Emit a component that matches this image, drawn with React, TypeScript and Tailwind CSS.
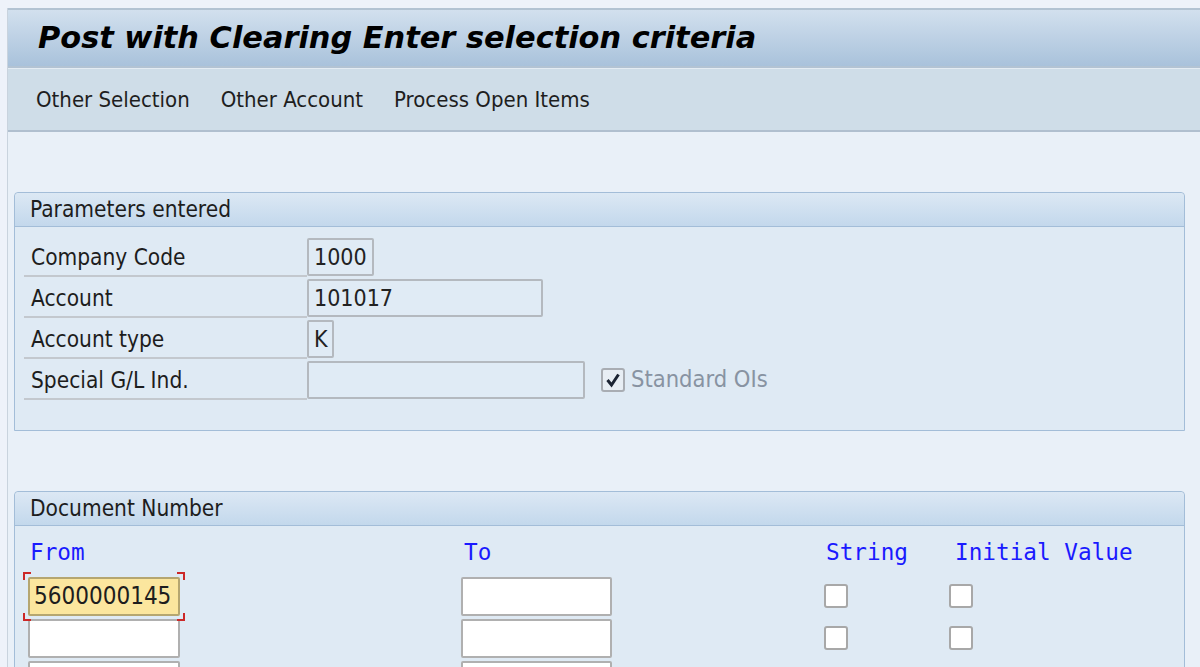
import React from "react";

const sans = { fontFamily: '"DejaVu Sans Condensed", "DejaVu Sans", sans-serif' };

const ReadOnlyBox = ({ value, width }: { value: string; width: string }) => (
  <div
    className={`h-[38px] ${width} border-2 border-[#b4b9bf] rounded-[2px] bg-[#e0ebf5] px-[5px] text-[23px] leading-[34px] text-[#222]`}
  >
    {value}
  </div>
);

const Checkbox = ({ checked, disabled }: { checked?: boolean; disabled?: boolean }) => (
  <div
    className={`w-[24px] h-[24px] rounded-[3px] border-2 flex items-center justify-center ${
      disabled ? "border-[#a9adb3] bg-[#e8eef4]" : "border-[#a8a8a8] bg-white"
    }`}
  >
    {checked && (
      <svg width="16" height="16" viewBox="0 0 16 16">
        <path d="M2.5 8 L6.5 13 L13.5 2.5" fill="none" stroke="#1c2433" strokeWidth="3" />
      </svg>
    )}
  </div>
);

const GroupBox = ({ title, children }: { title: string; children: React.ReactNode }) => (
  <div className="ml-[6px] mr-[15px] border border-[#a3bdd8] rounded-t-[4px] bg-[#dfeaf4]">
    <div className="h-[34px] px-[15px] bg-gradient-to-b from-[#dce8f4] to-[#c3d8ec] border-b border-[#a3bdd8] rounded-t-[4px] text-[22.5px] leading-[33px] text-[#1d1d1d]">
      {title}
    </div>
    {children}
  </div>
);

const params = [
  { label: "Company Code", value: "1000", width: "w-[67px]" },
  { label: "Account", value: "101017", width: "w-[236px]" },
  { label: "Account type", value: "K", width: "w-[27px]" },
  { label: "Special G/L Ind.", value: "", width: "w-[278px]" },
];

const mono = { fontFamily: '"DejaVu Sans Mono", "Liberation Mono", monospace' };

export default function App() {
  return (
    <div className="w-[1200px] h-[667px] overflow-hidden bg-[#eef2fa]" style={sans}>
      <div className="h-[8px]" />
      <div className="ml-[7px] border-l border-[#c9d3de] bg-[#e9f0f8] h-[659px]">
        {/* Title bar */}
        <div className="h-[60px] border-t-2 border-b-2 border-[#b3c3d3] bg-gradient-to-b from-[#d2e0ee] to-[#a9c2db] pl-[30px]">
          <h1
            className="text-[30.4px] leading-[56px] font-bold italic text-black"
            style={{ fontFamily: '"DejaVu Sans", Verdana, sans-serif' }}
          >
            Post with Clearing Enter selection criteria
          </h1>
        </div>

        {/* Toolbar */}
        <div className="h-[64px] bg-[#cfdde8] border-t border-[#e4ecf3] border-b-2 border-b-[#b0bfcf] flex items-center gap-[31px] pl-[28px] text-[22px] text-[#1e1e1e]">
          <span>Other Selection</span>
          <span>Other Account</span>
          <span>Process Open Items</span>
        </div>

        <div className="h-[60px]" />

        {/* Parameters entered */}
        <GroupBox title="Parameters entered">
          <div className="pt-[9px] pb-[30px] pl-[9px]">
            {params.map((p, i) => (
              <div key={p.label} className="flex items-end h-[41px]">
                <div className="w-[283px] h-[39px] border-b-2 border-[#c3c8ce] pl-[7px] text-[22.5px] leading-[38px] text-[#1d1d1d]">
                  {p.label}
                </div>
                <div className="flex items-center gap-[16px] h-[41px]">
                  <ReadOnlyBox value={p.value} width={p.width} />
                  {i === 3 && (
                    <div className="flex items-center gap-[6px]">
                      <Checkbox checked disabled />
                      <span className="text-[23.5px] text-[#8893a2]">Standard OIs</span>
                    </div>
                  )}
                </div>
              </div>
            ))}
          </div>
        </GroupBox>

        <div className="h-[60px]" />

        {/* Document Number */}
        <GroupBox title="Document Number">
          <div className="pl-[15px] pt-[12px]">
            <div className="flex h-[37px] text-[22.7px] leading-[28px] text-[#1a1aff]" style={mono}>
              <span className="w-[434px]">From</span>
              <span className="w-[362px]">To</span>
              <span className="w-[129px]">String</span>
              <span>Initial Value</span>
            </div>
            {[0, 1, 2].map((r) => (
              <div key={r} className="flex items-center h-[42px]">
                <div className="w-[431px]">
                  {r === 0 ? (
                    <div className="relative w-[152px] -ml-[2px]">
                      <div className="h-[39px] border-2 border-[#b5a670] rounded-[2px] bg-[#fbe69e] pl-[4px] text-[24px] leading-[35px] text-[#1d1d1d]">
                        5600000145
                      </div>
                      <span className="absolute -left-[5px] -top-[5px] w-[8px] h-[8px] border-l-2 border-t-2 border-[#cc2828]" />
                      <span className="absolute -right-[5px] -top-[5px] w-[8px] h-[8px] border-r-2 border-t-2 border-[#cc2828]" />
                      <span className="absolute -left-[5px] -bottom-[5px] w-[8px] h-[8px] border-l-2 border-b-2 border-[#cc2828]" />
                      <span className="absolute -right-[5px] -bottom-[5px] w-[8px] h-[8px] border-r-2 border-b-2 border-[#cc2828]" />
                    </div>
                  ) : (
                    <div className="w-[152px] h-[39px] -ml-[2px] border-2 border-[#b0b0b0] rounded-[2px] bg-white" />
                  )}
                </div>
                <div className="w-[363px]">
                  <div className="w-[151px] h-[39px] border-2 border-[#b0b0b0] rounded-[2px] bg-white" />
                </div>
                <div className="w-[125px]">{r < 2 && <Checkbox />}</div>
                <div>{r < 2 && <Checkbox />}</div>
              </div>
            ))}
          </div>
        </GroupBox>
      </div>
    </div>
  );
}
